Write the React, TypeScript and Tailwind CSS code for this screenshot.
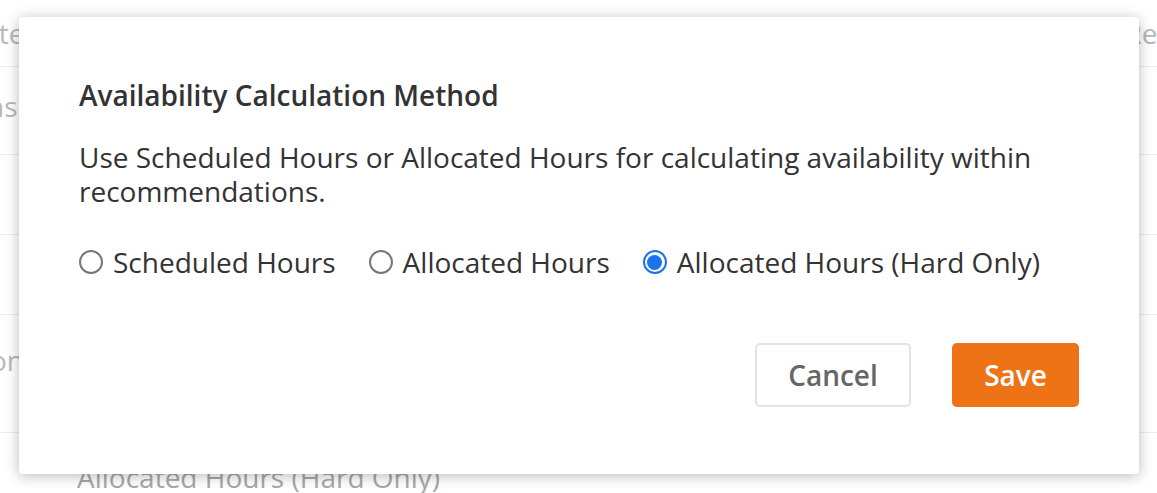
import React from "react";

function Radio({ checked, label }: { checked?: boolean; label: string }) {
  return (
    <label className="flex items-center gap-[10px]">
      {checked ? (
        <span className="flex h-[24px] w-[24px] items-center justify-center rounded-full border-[2px] border-[#1a73e8] bg-white">
          <span className="h-[15px] w-[15px] rounded-full bg-[#1a73e8]" />
        </span>
      ) : (
        <span className="h-[24px] w-[24px] rounded-full border-[2px] border-[#767676] bg-white" />
      )}
      <span className="text-[28px] leading-[36px] text-[#333333]">{label}</span>
    </label>
  );
}

export default function App() {
  const font = { fontFamily: '"Open Sans", "Noto Sans", sans-serif' };
  return (
    <div className="relative h-[493px] w-[1157px] overflow-hidden bg-white" style={font}>
      {/* background page */}
      <div className="flex flex-col text-[28px] text-[#b8b8b8]">
        <div className="flex h-[67px] items-center justify-between border-b border-[#ececec]">
          <span className="-ml-[34px]">Rate</span>
          <span className="-mr-[14px]">Rec</span>
        </div>
        <div className="flex h-[88px] items-center border-b border-[#ececec] pb-[10px]">
          <span className="-ml-[78px]">Actions</span>
        </div>
        <div className="h-[80px] border-b border-[#ececec]" />
        <div className="h-[80px] border-b border-[#ececec]" />
        <div className="flex h-[118px] items-center border-b border-[#ececec] pb-[28px]">
          <span className="-ml-[66px]">Option</span>
        </div>
        <div className="flex h-[60px] items-start pl-[77px] pt-[26px]">
          <span className="leading-[36px] text-[#a8a8a8]">Allocated Hours (Hard Only)</span>
        </div>
      </div>

      {/* modal */}
      <div className="absolute left-[19px] top-[17px] flex h-[457px] w-[1120px] flex-col rounded-[4px] bg-white px-[60px] pt-[62px] shadow-[0_2px_14px_rgba(0,0,0,0.28)]">
        <h2 className="text-[28px] font-semibold leading-[32px] text-[#333333]">
          Availability Calculation Method
        </h2>
        <p className="mt-[29px] text-[28px] leading-[34px] text-[#333333]">
          Use Scheduled Hours or Allocated Hours for calculating availability within recommendations.
        </p>
        <div className="mt-[36px] flex items-center gap-[33px]">
          <Radio label="Scheduled Hours" />
          <Radio label="Allocated Hours" />
          <Radio checked label="Allocated Hours (Hard Only)" />
        </div>
        <div className="mt-[63px] flex justify-end gap-[41px]">
          <button className="h-[64px] w-[156px] rounded-[5px] border-[2px] border-[#e3e3e3] bg-white text-[28px] font-semibold text-[#666666]">
            Cancel
          </button>
          <button className="h-[64px] w-[127px] rounded-[5px] bg-[#ee7316] text-[28px] font-semibold text-white">
            Save
          </button>
        </div>
      </div>
    </div>
  );
}
